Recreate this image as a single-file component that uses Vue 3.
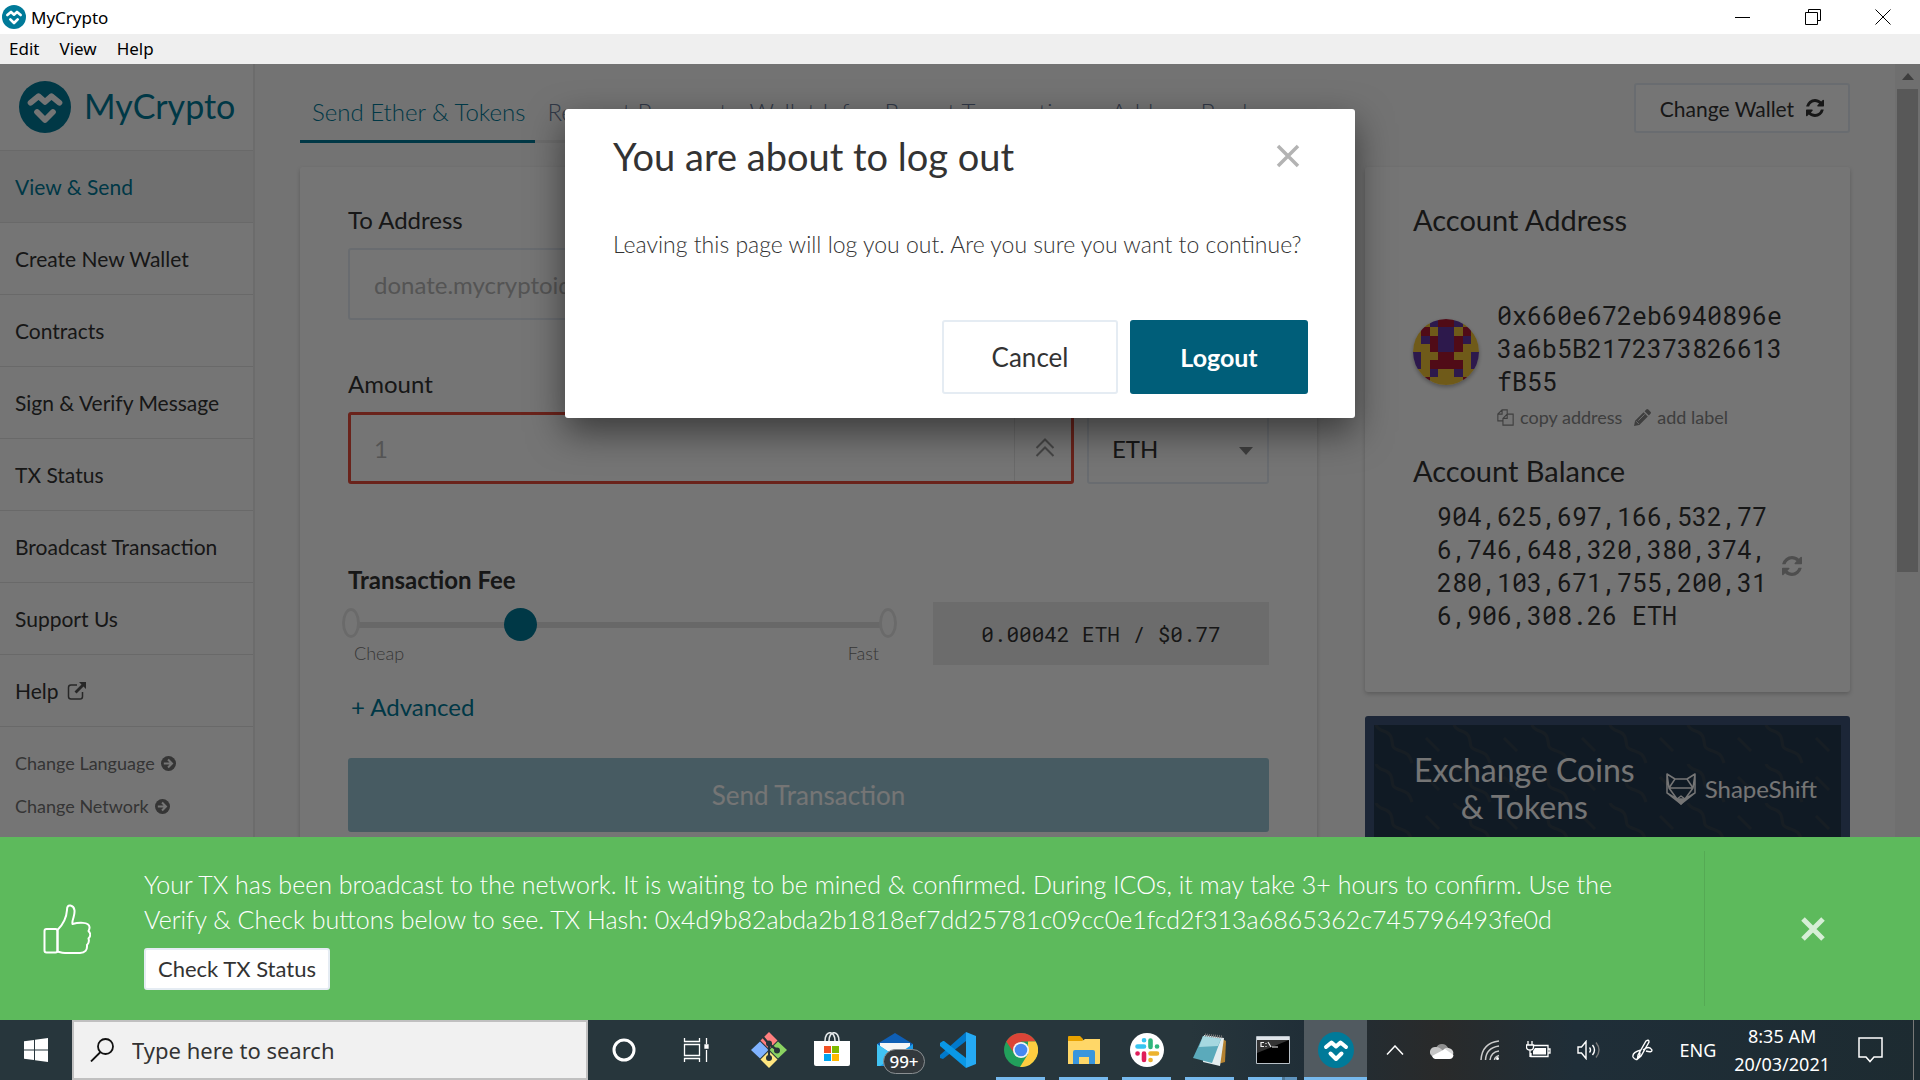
<script setup>
import { ref } from 'vue'

const navItems = ['View & Send', 'Create New Wallet', 'Contracts', 'Sign & Verify Message', 'TX Status', 'Broadcast Transaction', 'Support Us', 'Help']
const tabs = ['Send Ether & Tokens', 'Request Payment', 'Wallet Info', 'Recent Transactions', 'Address Book']
const feeLevel = ref(31)
const recipient = ref('')
const amount = ref('')

const palette = { y: '#f2c438', r: '#ae1a34', p: '#6238a5' }
const identicon = ['yyprrpyy', 'yryppyry', 'yprpprpy', 'yyrppryy', 'pyyrryyp', 'pyrrrryp', 'yypyypyy', 'yryyyyry']
const cells = identicon.flatMap((row, y) => [...row].map((c, x) => ({ x, y, fill: palette[c] })))
</script>

<template>
  <div class="desktop">
    <header class="titlebar">
      <svg class="title-logo" viewBox="0 0 36 36"><circle cx="18" cy="18" r="18" fill="#007a99" /><path d="M8 15l5.500-4.500L18 14.500l4.500-4L28 15" class="logo-line" /><path d="M12.500 21.500L18 27l5.500-5.500" class="logo-line" /></svg>
      <span class="title-text">MyCrypto</span>
      <div class="window-controls">
        <button aria-label="Minimize"><svg viewBox="0 0 16 16"><path d="M0 8.500h15" /></svg></button>
        <button aria-label="Restore"><svg viewBox="0 0 16 16"><path d="M.5 3.500h12v12H.5zM3.500 3V.5h12v11H13" /></svg></button>
        <button aria-label="Close window"><svg viewBox="0 0 16 16"><path d="M.5.5l15 15M15.500.5l-15 15" /></svg></button>
      </div>
    </header>
    <nav class="menubar"><a href="#">Edit</a><a href="#">View</a><a href="#">Help</a></nav>

    <div class="app">
      <aside class="sidebar">
        <a href="#" class="brand">
          <svg viewBox="0 0 36 36"><circle cx="18" cy="18" r="18" fill="#007a99" /><path d="M8 15l5.500-4.500L18 14.500l4.500-4L28 15" class="logo-line" /><path d="M12.500 21.500L18 27l5.500-5.500" class="logo-line" /></svg>
          <span>MyCrypto</span>
        </a>
        <a v-for="(item, i) in navItems" :key="item" href="#" class="nav-item" :class="{ active: i === 0 }">
          {{ item }}
          <svg v-if="item === 'Help'" class="external" viewBox="0 0 20 20"><path d="M10 4H4a2.500 2.500 0 0 0-2.500 2.500v9A2.500 2.500 0 0 0 4 18h9a2.500 2.500 0 0 0 2.500-2.500V11" fill="none" stroke="currentColor" stroke-width="1.500" /><path d="M12 1h7v7l-2.500-2.500-7 7-2-2 7-7z" fill="currentColor" /></svg>
        </a>
        <div class="side-links">
          <a v-for="l in ['Change Language', 'Change Network']" :key="l" href="#">{{ l }}
            <svg viewBox="0 0 16 16"><circle cx="8" cy="8" r="8" fill="currentColor" /><path d="M3 8h8.500M7.500 3.800L11.700 8l-4.200 4.200" fill="none" stroke="#fff" stroke-width="2.200" /></svg>
          </a>
        </div>
      </aside>

      <main class="content">
        <div class="top-row">
          <nav class="tabs"><a v-for="(t, i) in tabs" :key="t" href="#" :class="{ current: i === 0 }">{{ t }}</a></nav>
          <button class="change-wallet">Change Wallet
            <svg viewBox="0 0 1536 1536"><path d="M1511 928q0 5-1 7-64 268-268 434.500T764 1536q-146 0-282.500-55T238 1324l-129 129q-19 19-45 19t-45-19-19-45V960q0-26 19-45t45-19h448q26 0 45 19t19 45-19 45l-137 137q71 66 161 102t187 36q134 0 250-65t186-179q11-17 53-117 8-23 30-23h192q13 0 22.500 9.500t9.500 22.500zm25-800v448q0 26-19 45t-45 19h-448q-26 0-45-19t-19-45 19-45l138-138Q969 256 768 256q-134 0-250 65T332 500q-11 17-53 117-8 23-30 23H50q-13 0-22.500-9.500T18 608v-7q65-268 270-434.500T768 0q146 0 284 55.500T1297 212l130-129q19-19 45-19t45 19 19 45z" fill="currentColor" /></svg>
          </button>
        </div>

        <div class="columns">
          <section class="card send-card">
            <label for="to">To Address</label>
            <input id="to" v-model="recipient" class="field" type="text" placeholder="donate.mycryptoid.eth">
            <div class="amount-block">
              <label for="amount">Amount</label>
              <div class="amount-row">
                <div class="amount-field">
                  <input id="amount" v-model="amount" type="text" placeholder="1">
                  <button aria-label="Send entire balance"><svg viewBox="0 0 20 20"><path d="M1.500 10L10 1.500l8.500 8.500M1.500 18L10 9.500l8.500 8.500" fill="none" stroke="currentColor" stroke-width="2" /></svg></button>
                </div>
                <div class="select-wrap">
                  <select aria-label="Unit"><option>ETH</option></select>
                  <svg viewBox="0 0 14 8"><path d="M0 0h14L7 8z" fill="currentColor" /></svg>
                </div>
              </div>
            </div>
            <label for="fee" class="fee-label">Transaction Fee</label>
            <div class="fee-row">
              <div class="fee-slider">
                <div class="slider"><input id="fee" v-model="feeLevel" type="range" min="0" max="100"><i class="dot low"></i><i class="dot high"></i></div>
                <div class="slider-labels"><span>Cheap</span><span>Fast</span></div>
              </div>
              <output class="fee-value">0.00042 ETH / $0.77</output>
            </div>
            <a href="#" class="advanced">+ Advanced</a>
            <button class="send">Send Transaction</button>
          </section>

          <div class="right-column">
            <section class="card account">
              <h2>Account Address</h2>
              <div class="address-row">
                <svg class="identicon" viewBox="0 0 8 8" shape-rendering="crispEdges"><rect v-for="c in cells" :key="`${c.x}-${c.y}`" :x="c.x" :y="c.y" width="1" height="1" :fill="c.fill" /></svg>
                <div>
                  <div class="mono">0x660e672eb6940896e<br>3a6b5B2172373826613<br>fB55</div>
                  <div class="address-actions">
                    <a href="#"><svg viewBox="0 0 20 20" fill="none" stroke="currentColor" stroke-width="1.300"><path d="M7 14H1V6l5-5h6v5M6 1v5H1M7 11l5-5h7v13H7zM12 6v5H7" /></svg>copy address</a>
                    <a href="#"><svg viewBox="0 0 16 16"><path d="M0 16l1-5L9 3l4 4-8 8zM10 2l1.500-1.500q1-1 2 0l2 2q1 1 0 2L14 6z" fill="currentColor" /><path d="M2 11.500L4.500 14M4 11l6-6" stroke="#fff" stroke-width=".8" /></svg>add label</a>
                  </div>
                </div>
              </div>
              <h2>Account Balance</h2>
              <div class="balance-row">
                <div class="mono">904,625,697,166,532,77<br>6,746,648,320,380,374,<br>280,103,671,755,200,31<br>6,906,308.26 ETH</div>
                <button aria-label="Refresh balance"><svg viewBox="0 0 1536 1536"><path d="M1511 928q0 5-1 7-64 268-268 434.500T764 1536q-146 0-282.500-55T238 1324l-129 129q-19 19-45 19t-45-19-19-45V960q0-26 19-45t45-19h448q26 0 45 19t19 45-19 45l-137 137q71 66 161 102t187 36q134 0 250-65t186-179q11-17 53-117 8-23 30-23h192q13 0 22.500 9.500t9.500 22.500zm25-800v448q0 26-19 45t-45 19h-448q-26 0-45-19t-19-45 19-45l138-138Q969 256 768 256q-134 0-250 65T332 500q-11 17-53 117-8 23-30 23H50q-13 0-22.500-9.500T18 608v-7q65-268 270-434.500T768 0q146 0 284 55.500T1297 212l130-129q19-19 45-19t45 19 19 45z" fill="currentColor" /></svg></button>
              </div>
            </section>
            <a href="#" class="promo">
              <svg class="pattern" aria-hidden="true">
                <defs><pattern id="waves" width="78" height="39" patternUnits="userSpaceOnUse">
                  <g fill="none" stroke="#34424f" stroke-width="3">
                    <path d="M2 0c3 8 12 4 15 12s-1 10 7 13 11 3 14 13" /><path d="M52 13l13 13" />
                  </g>
                </pattern></defs>
                <rect width="100%" height="100%" fill="url(#waves)" />
              </svg>
              <span class="promo-text">Exchange Coins<br>&amp; Tokens</span>
              <span class="shapeshift">
                <svg viewBox="0 0 30 32" fill="none" stroke="currentColor" stroke-width="1.500" stroke-linejoin="round"><path d="M1 1l8 5h12l8-5v19L15 31 1 20zM1 1l2 14 6-9M29 1l-2 14-6-9M3 15h24M3 15l8 11 4-3 4 3 8-11M1 20l10 6M29 20l-10 6M15 31l-4-5M15 31l4-5" /><path d="M11 26h8l-4 5z" fill="currentColor" /></svg>
                ShapeShift
              </span>
            </a>
          </div>
        </div>
      </main>

      <div class="scrollbar"><svg viewBox="0 0 12 7"><path d="M0 7l6-7 6 7z" fill="#878787" /></svg><div class="scroll-thumb"></div></div>

      <div class="overlay">
        <div class="modal" role="dialog" aria-labelledby="modal-title">
          <div class="modal-head">
            <h1 id="modal-title">You are about to log out</h1>
            <button aria-label="Close"><svg viewBox="0 0 24 24"><path d="M2 2l20 20M22 2L2 22" stroke="#b3b3b3" stroke-width="3.500" /></svg></button>
          </div>
          <p>Leaving this page will log you out. Are you sure you want to continue?</p>
          <div class="modal-actions"><button class="cancel">Cancel</button><button class="logout">Logout</button></div>
        </div>
      </div>
    </div>

    <section class="banner">
      <svg class="thumb" viewBox="0 0 48 50" fill="none" stroke="#fff" stroke-width="2" stroke-linejoin="round"><rect x="1.500" y="25" width="13" height="23.500" rx="2" /><path d="M14.500 26c5-5 9-12 9.500-20 0-3 1-5 3.500-4.500 5 1 4.500 7 3 12-.6 2-1.500 4-1 6.500C35 18.500 46 17.500 46.500 23c.2 2-.5 3-1 4 2.500 2.500 2 5.500 0 7.500 1 3 0 5-1.500 6.500.5 5-2 8-7 8H22c-3 0-4-.5-7.500-1.500z" /></svg>
      <div class="banner-body">
        <p>Your TX has been broadcast to the network. It is waiting to be mined &amp; confirmed. During ICOs, it may take 3+ hours to confirm. Use the<br>Verify &amp; Check buttons below to see. TX Hash: 0x4d9b82abda2b1818ef7dd25781c09cc0e1fcd2f313a6865362c745796493fe0d</p>
        <button class="check">Check TX Status</button>
      </div>
      <button class="banner-close" aria-label="Dismiss"><svg viewBox="0 0 24 24"><path d="M2 2l20 20M22 2L2 22" stroke="#d6eed6" stroke-width="5" /></svg></button>
    </section>

    <footer class="taskbar">
      <button class="start" aria-label="Start"><svg viewBox="0 0 24 24" fill="#fff"><path d="M0 3.300l10-1.400v9.600H0zM11 1.700L24 0v11.500H11zM0 12.500h10v9.600L0 20.700zM11 12.500h13V24l-13-1.700z" /></svg></button>
      <div class="search">
        <svg viewBox="0 0 24 24" fill="none" stroke="#111" stroke-width="1.800"><circle cx="15.500" cy="8.500" r="7.500" /><path d="M10.500 14L1 23.500" /></svg>
        <input type="text" aria-label="Search" placeholder="Type here to search">
      </div>
      <div class="sys"><svg width="24" height="24" viewBox="0 0 24 24"><circle cx="12" cy="12" r="10" fill="none" stroke="#fff" stroke-width="3" /></svg></div>
      <div class="sys"><svg width="26" height="24" viewBox="0 0 26 24" fill="none" stroke="#fff" stroke-width="1.300"><path d="M1.500 0v3.500h15V0M1.500 6.500h15v11h-15zM1.500 24v-3.500h15V24M23.500 0v6M23.500 12v12" /><path d="M22 7h3v3h-3z" fill="#fff" /></svg></div>
      <div class="pinned">
        <div class="task"><svg width="36" height="36" viewBox="0 0 36 36"><path d="M18 0l8.500 8.500L18 17 9.500 8.500z" fill="#ff7f7f" /><path d="M27 9.500l9 8.500-9 8.500L18.500 18z" fill="#8bd362" /><path d="M18 19l8.500 8.500L18 36l-8.500-8.500z" fill="#ffe680" /><path d="M9 9.500l8.500 8.500L9 26.500 0 18z" fill="#80b3ff" /><path d="M12 5l6 7v14M18 12l8 6" fill="none" stroke="#26343a" stroke-width="2.200" /><g fill="#26343a"><circle cx="18" cy="11.500" r="3" /><circle cx="18" cy="26" r="3" /><circle cx="26" cy="18.500" r="3" /></g></svg></div>
        <div class="task"><svg width="36" height="36" viewBox="0 0 36 36"><path d="M11 9c0-11 10-11 10 0M15 9c0-11 10-11 10 0" fill="none" stroke="#e4e8e9" stroke-width="1.600" /><path d="M0 9h36v23q0 2-2 2H2q-2 0-2-2z" fill="#fff" /><path d="M10 14h7v7h-7z" fill="#f25022" /><path d="M18 14h7v7h-7z" fill="#7fba00" /><path d="M10 22h7v7h-7z" fill="#00a4ef" /><path d="M18 22h7v7h-7z" fill="#ffb900" /></svg></div>
        <div class="task"><svg width="36" height="36" viewBox="0 0 36 36"><path d="M0 12L18 1l18 11v10H0z" fill="#0f5fb5" /><path d="M3 11h30v12H3z" fill="#f6f6f6" /><path d="M0 12l18 12 18-12v22H0z" fill="#1c9be8" /><path d="M0 12l18 12L3 34H0z" fill="#41c3f3" /></svg><span class="badge">99+</span></div>
        <div class="task"><svg width="36" height="36" viewBox="0 0 36 36"><path d="M26 0L0 23v3l3 1L26 9z" fill="#0179cb" /><path d="M3 9L0 11v3l26 22V26L4 9z" fill="#0a98e6" /><path d="M26 0l10 4v28l-10 4V9z" fill="#25aaf4" /></svg></div>
        <div class="task open"><svg width="34" height="34" viewBox="0 0 34 34"><circle cx="17" cy="17" r="17" fill="#22a05b" /><path d="M2.300 8.500A17 17 0 0 1 31.700 8.500H17L10 20z" fill="#db4437" /><path d="M31.700 8.500A17 17 0 0 1 16 34l8-13V8.500z" fill="#ffcd40" /><circle cx="17" cy="17" r="8" fill="#f4f4f4" /><circle cx="17" cy="17" r="6.300" fill="#4688f1" /></svg></div>
        <div class="task open"><svg width="32" height="28" viewBox="0 0 32 28"><path d="M0 1q0-1 1-1h11l3 3v4H0z" fill="#e8a200" /><path d="M0 5h14l3-2h15v24q0 1-1 1H0z" fill="#ffd768" /><path d="M5 28V16q0-2 2-2h18q2 0 2 2v12h-6v-7H11v7z" fill="#3a96dd" /></svg></div>
        <div class="task open"><svg width="34" height="34" viewBox="0 0 34 34"><circle cx="17" cy="17" r="17" fill="#fff" /><g stroke-width="4.600" stroke-linecap="round"><path d="M14 7.200h.1M7.500 13.500H14" stroke="#36c5f0" /><path d="M20.500 7.500V14M27 13.500h.1" stroke="#2eb67d" /><path d="M20.500 20.500H27M20.500 27h.1" stroke="#ecb22e" /><path d="M14 20.500V27M7.500 20.500h.1" stroke="#e01e5a" /></g></svg></div>
        <div class="task open"><svg width="34" height="34" viewBox="0 0 34 34"><path d="M28 5l5 3-1 21-7 2z" fill="#b48231" /><path d="M11 2l20 3-4 28-17-4z" fill="#e4edef" /><path d="M10 3l18 3-9 24L0 25z" fill="#5baabb" /><path d="M10 3l18 3-3 7-19 1z" fill="#a6d8e0" /><path d="M12 2l18 2" stroke="#777" stroke-width="3" stroke-dasharray="1 1" /></svg></div>
        <div class="task open stacked"><svg width="34" height="28" viewBox="0 0 34 28"><path d="M.5.5h33v27H.5z" fill="#000" stroke="#b9c1c8" /><path d="M1 1h32v3H1z" fill="#dfe5ea" /><path d="M1 4h32L1 17z" fill="#333" /><g fill="none" stroke="#eee" stroke-width="1.200"><path d="M8 6.500H5v4h3M10 7v1M10 10v1M12 6l3 5M16 11h6" /></g></svg></div>
        <div class="task open focused"><svg width="36" height="36" viewBox="0 0 36 36"><circle cx="18" cy="18" r="18" fill="#007a99" /><path d="M8 15l5.500-4.500L18 14.500l4.500-4L28 15" class="logo-line" /><path d="M12.500 21.500L18 27l5.500-5.500" class="logo-line" /></svg></div>
      </div>
      <div class="tray">
        <svg width="18" height="10" viewBox="0 0 18 10" fill="none" stroke="#fff" stroke-width="1.500"><path d="M1 9.500l8-8.500 8 8.500" /></svg>
        <svg width="24" height="18" viewBox="0 0 24 18"><path d="M6 7a6.500 6.500 0 0 1 12 0l-5 5z" fill="#8f8f8f" /><path d="M4 16A5 5 0 0 1 6 6q4 0 7 4z" fill="#c5c5c5" /><path d="M12 11q3-6 8-3.500A4.500 4.500 0 0 1 22 15z" fill="#d8d8d8" /><path d="M2 15L15 8l8.500 6q-.5 4-4 4H5q-2 0-3-3z" fill="#fff" /></svg>
        <svg width="20" height="20" viewBox="0 0 20 20" fill="none" stroke="#ccc" stroke-width="1.500"><path d="M1 20Q2 3 19 1M5.500 20Q6 8 19 6M10 20q1-8 9-9M14.500 20q0-3 4.500-4.500" /><circle cx="17.500" cy="18.500" r="1.500" fill="#fff" stroke="none" /></svg>
        <svg width="25" height="18" viewBox="0 0 25 18" fill="none" stroke="#fff" stroke-width="1.300"><path d="M7 4.500h15v11H5V12M22 8h2v4h-2M2 0v4M6 0v4M.5 4h7v2q0 3-3.500 3T.5 6zM4 9v7" /><path d="M9 7h11v6.500H7V10z" fill="#fff" stroke="none" /></svg>
        <svg width="24" height="20" viewBox="0 0 24 20" fill="none" stroke="#fff" stroke-width="1.400"><path d="M1 7h3.500L9 1.500v17L4.500 13H1zM12.500 7.500q2 2.500 0 5M15.500 5q4 5 0 10" /><path d="M19 2.500q6 7.500 0 15" stroke="#777" /></svg>
        <svg class="pen" width="21" height="22" viewBox="0 0 21 22" fill="none" stroke="#fff" stroke-width="1.400"><path d="M6 16L14 2q3-2 3 1L9 17l-3.500 3zM9 11q-9 2-8 7 3 5 6 0 2-4 0-5M11 11q6-5 9 0 0 3-6 1" /></svg>
        <span class="lang">ENG</span>
        <div class="clock"><span>8:35 AM</span><span>20/03/2021</span></div>
        <svg class="notice" width="25" height="26" viewBox="0 0 25 26" fill="none" stroke="#fff" stroke-width="1.500"><path d="M1 1h23v19h-8l-4 4.500L8 20H1z" /></svg>
        <i class="peek"></i>
      </div>
    </footer>
  </div>
</template>

<style>
body { margin: 0; }
</style>

<style scoped>
* { box-sizing: border-box; }
a { color: inherit; text-decoration: none; }
button { font: inherit; color: inherit; border: 0; background: none; padding: 0; cursor: pointer; }
h1, h2, p { margin: 0; font-weight: 400; }
svg { flex: none; display: block; }
.logo-line { fill: none; stroke: #fff; stroke-width: 4; stroke-linecap: round; stroke-linejoin: round; }

.desktop { height: 100vh; display: flex; flex-direction: column; overflow: hidden; font-family: Lato, sans-serif; color: #333; }
.titlebar { flex: none; height: 34px; display: flex; align-items: center; background: #fff; color: #000; font: 17px "Noto Sans", sans-serif; }
.title-logo { width: 24px; height: 24px; margin: 0 5px 0 2px; }
.window-controls { margin-left: auto; padding-right: 2px; display: flex; }
.window-controls button { width: 70px; height: 34px; display: grid; place-items: center; }
.window-controls svg { width: 16px; height: 16px; fill: none; stroke: #000; stroke-width: 1; }
.menubar { flex: none; height: 30px; display: flex; align-items: center; gap: 20px; padding: 0 9px 2px; background: #efefef; color: #000; font: 17px "Noto Sans", sans-serif; }

.app { flex: 1; min-height: 0; position: relative; display: flex; overflow: hidden; background: #fafafa; }
.sidebar { flex: none; width: 255px; background: #fff; border-right: 2px solid #ececec; }
.brand { height: 87px; padding-left: 19px; display: flex; align-items: center; gap: 13px; color: #007a99; font-size: 34px; border-bottom: 1px solid #e5e5e5; }
.brand svg { width: 52px; height: 52px; }
.brand span { padding-bottom: 4px; }
.nav-item { height: 72px; padding-left: 15px; display: flex; align-items: center; gap: 8px; font-size: 21px; border-bottom: 1px solid #e5e5e5; }
.nav-item.active { background: #f5f5f5; color: #007a99; }
.external { width: 20px; height: 20px; color: #555; }
.side-links { padding: 15px 15px; display: flex; flex-direction: column; font-size: 18px; line-height: 43px; color: #737373; }
.side-links a { display: flex; align-items: center; gap: 6px; }
.side-links svg { width: 15px; height: 15px; }

.content { flex: 1; min-width: 0; padding: 19px 45px 0; }
.top-row { display: flex; justify-content: space-between; align-items: flex-start; margin-bottom: 24px; }
.tabs { display: flex; margin-top: 1px; flex: 1; max-width: 1017px; border-bottom: 3px solid #ebebeb; }
.tabs a { padding: 12px 10px 0 12px; height: 56px; line-height: 32px; font-size: 24px; font-weight: 300; color: #6b7a99; white-space: nowrap; }
.tabs a.current { color: #007a99; border-bottom: 3px solid #007a99; height: 59px; margin-bottom: -3px; }
.change-wallet { width: 216px; height: 50px; display: flex; align-items: center; justify-content: center; gap: 12px; font-size: 21px; background: #fff; border: 2px solid #e5ecf3; border-radius: 3px; }
.change-wallet svg { width: 18px; height: 18px; }
.columns { display: grid; grid-template-columns: minmax(0, 1fr) 485px; gap: 48px; align-items: start; }
.card { background: #fff; border-radius: 3px; box-shadow: 0 2px 4px rgba(0, 0, 0, .2); }
.send-card { padding: 38px 48px 48px; font-size: 24px; display: flex; flex-direction: column; }
.send-card label { line-height: 30px; }
.field { margin-top: 13px; height: 72px; border: 2px solid #e5ecf3; border-radius: 3px; padding: 0 24px; font: 24px Lato, sans-serif; background: #fff; }
input::placeholder { color: #b7b7b7; opacity: 1; }
.amount-block { margin-top: 49px; }
.amount-row { margin-top: 13px; display: flex; gap: 13px; }
.amount-field { flex: 1; height: 72px; display: flex; border: 3px solid #e74c3c; border-radius: 3px; }
.amount-field input { flex: 1; min-width: 0; border: 0; background: none; padding: 0 23px; font: 24px Lato, sans-serif; }
.amount-field button { width: 57px; padding-left: 4px; display: grid; place-items: center; border-left: 1px solid #e8e8e8; color: #999; }
.amount-field svg { width: 20px; height: 20px; }
.select-wrap { position: relative; width: 182px; height: 72px; }
.select-wrap select { appearance: none; width: 100%; height: 100%; padding: 0 23px; font: 24px Lato, sans-serif; color: #333; background: #fff; border: 2px solid #e5ecf3; border-radius: 3px; }
.select-wrap svg { position: absolute; right: 16px; top: 35px; width: 14px; height: 8px; color: #888; }
.send-card .fee-label { margin-top: 81px; font-weight: 700; }
.fee-row { display: flex; gap: 36px; margin-top: 7px; }
.fee-slider { flex: 1; margin-left: -6px; padding-top: 6px; }
.slider { position: relative; height: 33px; }
.slider input { appearance: none; display: block; width: 100%; height: 33px; margin: 0; background: linear-gradient(#e2e2e2, #e2e2e2) center / calc(100% - 18px) 6px no-repeat; }
.slider input::-webkit-slider-thumb { appearance: none; width: 33px; height: 33px; border-radius: 50%; background: #007a99; }
.dot { position: absolute; top: 0; width: 18px; height: 30px; background: #fff; border: 3px solid #e8e8e8; border-radius: 50%; }
.dot.low { left: 0; }
.dot.high { right: 0; }
.slider-labels { display: flex; justify-content: space-between; padding: 0 18px 0 12px; font-size: 18px; line-height: 24px; font-weight: 300; color: #777; }
.fee-value { width: 336px; height: 63px; display: grid; place-items: center; background: #ebebeb; font: 21px "Roboto Mono", "Liberation Mono", monospace; }
.advanced { align-self: flex-start; margin: 27px 0 0 3px; line-height: 30px; color: #007a99; }
.send { margin-top: 36px; height: 74px; background: #9cc7d6; color: #fff; font-size: 26px; border-radius: 3px; }

.account { height: 525px; padding: 36px 48px; }
.account h2 { font-size: 29px; line-height: 34px; }
.mono { font: 25px/33px "Roboto Mono", "Liberation Mono", monospace; }
.address-row { display: flex; gap: 18px; margin: 62px 0 25px; }
.identicon { width: 66px; height: 66px; margin-top: 20px; border-radius: 50%; box-shadow: 0 2px 4px rgba(0, 0, 0, .3); }
.address-actions { display: flex; gap: 12px; margin-top: 7px; font-size: 18px; line-height: 24px; color: #888; font-weight: 400; }
.address-actions a { display: flex; align-items: center; gap: 6px; }
.address-actions svg { width: 17px; height: 17px; }
.balance-row { display: flex; align-items: center; justify-content: space-between; padding: 12px 0 0 24px; }
.balance-row button { color: #aaa; }
.balance-row svg { width: 20px; height: 20px; }
.promo { position: relative; margin-top: 24px; height: 180px; display: flex; align-items: flex-start; padding: 26px 24px 0 40px; border: 9px solid #3d5479; border-radius: 3px; background: #24394f; color: #fff; }
.pattern { position: absolute; inset: 0; width: 100%; height: 100%; }
.promo-text { position: relative; font-size: 32px; line-height: 37px; text-align: center; white-space: nowrap; }
.shapeshift { position: relative; margin: 22px 0 0 auto; display: flex; align-items: center; gap: 9px; font-size: 24px; line-height: 32px; }
.shapeshift svg { width: 30px; height: 32px; }

.scrollbar { flex: none; width: 25px; background: #f1f1f1; display: flex; flex-direction: column; align-items: center; }
.scrollbar svg { width: 12px; height: 7px; margin: 9px 0; }
.scroll-thumb { width: 21px; height: 483px; background: #c1c1c1; }

.overlay { position: absolute; inset: 0; display: flex; justify-content: center; align-items: flex-start; padding-top: 45px; background: rgba(0, 0, 0, .54); }
.modal { width: 790px; padding: 23px 47px 24px 48px; background: #fff; border-radius: 3px; box-shadow: 0 14px 36px rgba(0, 0, 0, .5); }
.modal-head { display: flex; align-items: center; justify-content: space-between; padding-right: 8px; }
.modal h1 { font-size: 38px; line-height: 48px; }
.modal-head svg { width: 24px; height: 24px; }
.modal p { margin-top: 49px; font-size: 23px; line-height: 30px; font-weight: 300; white-space: nowrap; }
.modal-actions { display: flex; justify-content: flex-end; gap: 12px; margin-top: 61px; font-size: 26px; }
.cancel { width: 176px; height: 74px; border: 2px solid #e5ecf3; border-radius: 3px; }
.logout { width: 178px; height: 74px; background: #005e79; color: #fff; border-radius: 3px; font-size: 25px; font-weight: 700; }

.banner { flex: none; height: 183px; display: flex; align-items: center; background: #5dba5c; color: #fff; }
.thumb { width: 48px; height: 50px; margin: 0 53px 0 43px; }
.banner-body { flex: 1; min-width: 0; }
.banner-body p { font-size: 25px; line-height: 35px; font-weight: 300; white-space: nowrap; }
.check { margin-top: 11px; height: 42px; width: 186px; background: #fff; color: #333; font-size: 22px; line-height: 36px; border: 2px solid #e5ecf3; border-radius: 3px; display: block; }
.banner-close { width: 216px; height: 155px; border-left: 1px solid #55aa54; display: grid; place-items: center; }
.banner-close svg { width: 24px; height: 24px; }

.taskbar { flex: none; height: 60px; display: flex; background: linear-gradient(90deg, #27363c, #27363c 62%, #202e37 68%, #292a2a 75%, #1f2e38 82%, #1d2b31); color: #fff; font-family: "Noto Sans", sans-serif; }
.start { flex: none; width: 72px; display: grid; place-items: center; }
.start svg { width: 24px; height: 24px; }
.search { flex: none; width: 516px; border: 2px solid #c0c0c0; background: #f1f1f1; display: flex; align-items: center; padding-left: 16px; gap: 18px; }
.search svg { width: 24px; height: 24px; }
.search input { flex: 1; min-width: 0; border: 0; background: none; padding: 0; font: 22px "Noto Sans", sans-serif; }
.search input::placeholder { color: #333; }
.sys { flex: none; width: 72px; display: grid; place-items: center; }
.pinned { flex: none; display: flex; margin-left: 5px; }
.task { position: relative; width: 63px; display: grid; place-items: center; }
.task.open::after { content: ""; position: absolute; left: 7px; right: 7px; bottom: 0; height: 3px; background: #76b9ed; }
.task.stacked::after { background: linear-gradient(90deg, #76b9ed 70%, #4f7896 70%, #4f7896 75%, #5f93bd 75%); }
.task.focused { background: #515a60; }
.task.focused::after { left: 0; right: 0; }
.badge { position: absolute; left: 20px; top: 29px; width: 42px; height: 25px; border: 1px solid #8a8f92; border-radius: 13px; background: #33393d; font-size: 17px; line-height: 23px; text-align: center; font-weight: 500; }
.tray { flex: 1; min-width: 0; display: flex; align-items: center; justify-content: flex-end; gap: 26px; font-size: 18px; }
.tray .pen { margin-left: 5px; }
.clock { display: flex; flex-direction: column; align-items: center; line-height: 28px; margin-left: -8px; }
.tray .notice { margin-left: 2px; }
.tray .peek { margin-left: 4px; }
.peek { width: 7px; height: 60px; border-left: 1px solid #777; }
</style>
